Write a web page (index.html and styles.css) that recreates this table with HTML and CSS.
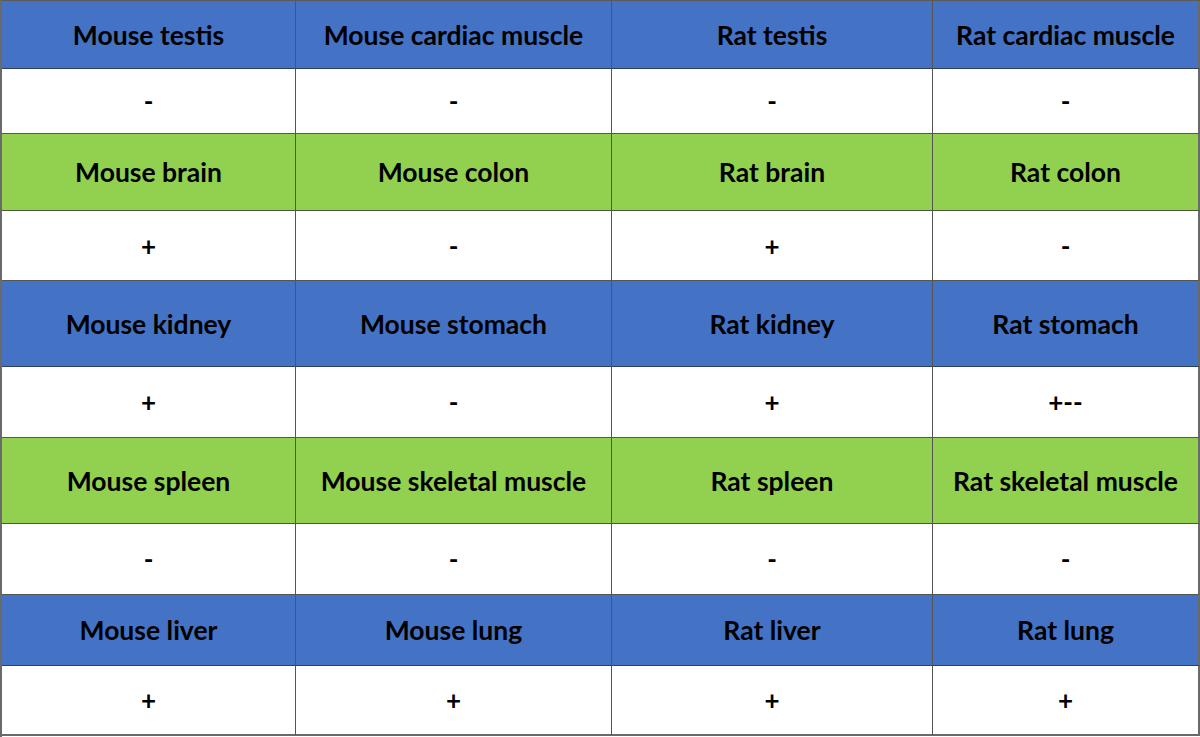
FILE: index.html
```html
<!DOCTYPE html>
<html>
<head>
<meta charset="utf-8">
<link rel="stylesheet" href="styles.css">
</head>
<body>
<div class="grid">
  <div class="cell blue">Mouse testis</div><div class="cell blue">Mouse cardiac muscle</div><div class="cell blue">Rat testis</div><div class="cell blue">Rat cardiac muscle</div>
  <div class="cell val">-</div><div class="cell val">-</div><div class="cell val">-</div><div class="cell val">-</div>
  <div class="cell green">Mouse brain</div><div class="cell green">Mouse colon</div><div class="cell green">Rat brain</div><div class="cell green">Rat colon</div>
  <div class="cell val">+</div><div class="cell val">-</div><div class="cell val">+</div><div class="cell val">-</div>
  <div class="cell blue">Mouse kidney</div><div class="cell blue">Mouse stomach</div><div class="cell blue">Rat kidney</div><div class="cell blue">Rat stomach</div>
  <div class="cell val">+</div><div class="cell val">-</div><div class="cell val">+</div><div class="cell val">+--</div>
  <div class="cell green">Mouse spleen</div><div class="cell green">Mouse skeletal muscle</div><div class="cell green">Rat spleen</div><div class="cell green">Rat skeletal muscle</div>
  <div class="cell val">-</div><div class="cell val">-</div><div class="cell val">-</div><div class="cell val">-</div>
  <div class="cell blue">Mouse liver</div><div class="cell blue">Mouse lung</div><div class="cell blue">Rat liver</div><div class="cell blue">Rat lung</div>
  <div class="cell val">+</div><div class="cell val">+</div><div class="cell val">+</div><div class="cell val">+</div>
</div>
</body>
</html>
```
FILE: styles.css
```css
html, body {
  margin: 0;
  padding: 0;
  background: #ffffff;
}
.grid {
  display: grid;
  width: 1200px;
  height: 737px;
  box-sizing: border-box;
  grid-template-columns: 294px 316px 321px 267px;
  grid-template-rows: 68px 65px 77px 70px 86px 71px 86px 71px 71px 70px;
  border-top: 1px solid #5a5a5a;
  border-left: 2px solid #6a6a6a;
  font-family: Lato, "Liberation Sans", sans-serif;
  font-weight: 700;
  color: #000;
}
.cell {
  display: flex;
  align-items: center;
  justify-content: center;
  border-right: 1px solid #555;
  border-bottom: 1px solid #555;
  font-size: 26.5px;
  white-space: nowrap;
  box-sizing: border-box;
}
.cell:nth-child(4n) {
  border-right: 2px solid #6a6a6a;
}
.cell:nth-last-child(-n+4) {
  border-bottom: 2px solid #6a6a6a;
}
.blue {
  background: #4472c4;
  border-bottom-color: #2f3f5f;
}
.green {
  background: #92d050;
  border-bottom-color: #4a5a3a;
}
.val {
  background: #ffffff;
  font-size: 26px;
}
```
